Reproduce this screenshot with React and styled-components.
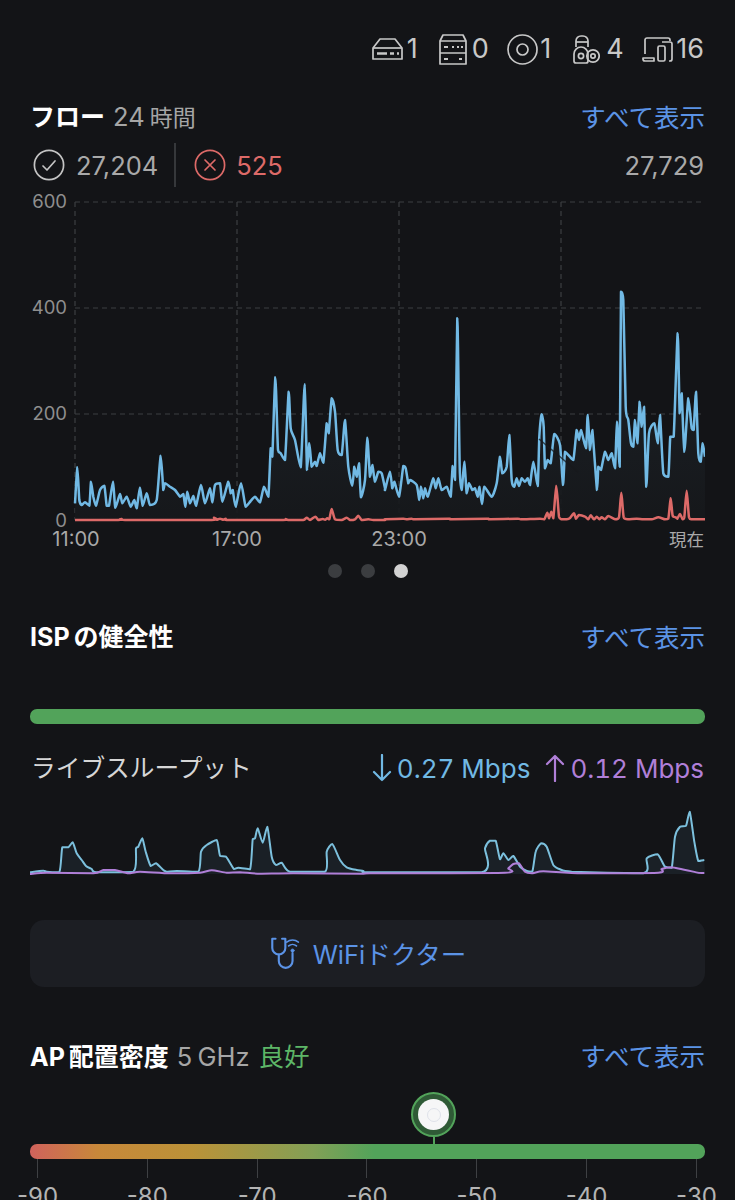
import styled, { createGlobalStyle } from "styled-components";

const GlobalStyle = createGlobalStyle`
   html, body {
      margin: 0;
      height: 1200px;
      overflow: hidden;
      background-color: #131417;
   }
   body {
      font-family: Inter, "Noto Sans CJK JP", sans-serif;
   }
`

const Page = styled.div`
   box-sizing: border-box;
   width: 735px;
   height: 1200px;
   overflow: hidden;
   padding: 34px 30px 0;
   background-color: #131417;
   color: #c6c6c6;
`

const StatusBar = styled.div`
   display: flex;
   justify-content: flex-end;
   align-items: center;
   height: 30px;
   padding-right: 1px;
`

const Stat = styled.div`
   display: flex;
   align-items: center;
   gap: ${(p) => p.$gap}px;
   margin-left: ${(p) => p.$left}px;
   font-size: 27px;
   line-height: 30px;
   color: #c8c8c8;
`

const Head = styled.div`
   box-sizing: border-box;
   display: flex;
   justify-content: space-between;
   align-items: center;
   height: 36px;
   padding-bottom: 4px;
   margin-top: ${(p) => p.$top}px;
`

const TitleGroup = styled.div`
   display: flex;
   align-items: baseline;
   gap: 8px;
   font-size: 25.5px;
   word-spacing: -2px;
   color: #a6a6a6;
`

const Title = styled.span`
   font-size: 25px;
   font-weight: 700;
   color: #fff;
`

const Kanji = styled.span`
   font-size: 23px;
`

const Good = styled.span`
   margin-left: 1px;
   color: #5db667;
`

const More = styled.a`
   font-size: 25.5px;
   color: #5b93e6;
`

const Counts = styled.div`
   display: flex;
   align-items: center;
   height: 44px;
   margin-top: 8px;
   font-size: 25.5px;
   color: #a9a9a9;
`

const Count = styled.span`
   display: flex;
   margin-left: ${(p) => p.$left}px;
   color: ${(p) => p.$color || "inherit"};
`

const Total = styled.span`
   margin-left: auto;
   padding-right: 1px;
`

const Divider = styled.div`
   width: 2px;
   height: 44px;
   margin: 0 18px 0 16px;
   background-color: #36383b;
`

const ChartSvg = styled.svg`
   display: block;
   width: 675px;
   height: ${(p) => p.$height}px;
   margin-top: ${(p) => p.$top}px;
`

const AxisText = styled.text`
   font-family: Inter, "Noto Sans CJK JP", sans-serif;
   font-size: ${(p) => p.$size}px;
   fill: ${(p) => p.$color};
`

const Dots = styled.div`
   display: flex;
   justify-content: center;
   gap: 19px;
   margin-top: 9px;
`

const Dot = styled.div`
   width: 14px;
   height: 14px;
   border-radius: 50%;
   background-color: ${(p) => (p.$active ? "#d2d2d2" : "#3b3d40")};
`

const HealthBar = styled.div`
   height: 15px;
   margin-top: 54px;
   border-radius: 7px;
   background-color: #52a35a;
`

const Throughput = styled.div`
   display: flex;
   align-items: center;
   justify-content: space-between;
   height: 36px;
   margin-top: 26px;
`

const ThroughputLabel = styled.span`
   padding: 0 0 4px 1px;
   font-size: 24.7px;
   color: #d6d6d6;
`

const Rates = styled.div`
   display: flex;
   align-items: center;
   padding-right: 1px;
   font-size: 26px;
   font-variant-numeric: tabular-nums;
`

const Rate = styled.span`
   display: flex;
   align-items: center;
   gap: 5px;
   margin-left: ${(p) => p.$left}px;
   color: ${(p) => p.$color};
`

const DoctorButton = styled.div`
   box-sizing: border-box;
   display: flex;
   justify-content: center;
   align-items: center;
   gap: 10px;
   height: 67px;
   padding-bottom: 3px;
   margin-top: 40px;
   border-radius: 14px;
   background-color: #1c1e23;
   color: #5b93e6;
   font-size: 25.5px;
`

const PinArea = styled.div`
   position: relative;
   height: 52px;
   margin-top: 18px;
`

const Pin = styled.div`
   position: absolute;
   top: 0;
   left: 381px;
   box-sizing: border-box;
   width: 45px;
   height: 45px;
   padding: 5px;
   border: 2px solid #52a35a;
   border-radius: 50%;
   background-color: #2f5a36;
   &::after {
      content: "";
      position: absolute;
      top: 43px;
      left: 19.5px;
      width: 2px;
      height: 9px;
      background-color: #52a35a;
   }
`

const PinFace = styled.div`
   display: flex;
   justify-content: center;
   align-items: center;
   height: 100%;
   border-radius: 50%;
   background-color: #f6f6f7;
`

const PinRing = styled.div`
   width: 12px;
   height: 12px;
   border: 1px solid #dfe2ea;
   border-radius: 50%;
`

const Gradient = styled.div`
   height: 15px;
   border-radius: 7px;
   background: linear-gradient(90deg, #d0625c 0%, #c8883a 10%, #bb9238 24%, #82a056 42%, #52a35a 51%, #52a35a 100%);
`

const Scale = styled.div`
   display: flex;
   justify-content: space-between;
   padding: 0 8px 0 7px;
`

const Tick = styled.div`
   display: flex;
   flex-direction: column;
   align-items: center;
   width: 1px;
   white-space: nowrap;
   font-size: 24px;
   color: #b4b4b4;
   &::before {
      content: "";
      flex: none;
      width: 1px;
      height: 19px;
      margin-bottom: 4px;
      background-color: #3e4043;
   }
`

const flowPoints = [
   // left half, read off at 3x
   105,490, 112,382, 118,480, 125,495, 135,487, 148,497, 153,425, 160,470, 168,497, 180,450, 193,437, 200,497, 207,497, 219,425,
   226,503, 240,462, 247,490, 260,470, 272,500, 283,480, 290,505, 300,443, 308,497, 320,460, 330,495, 350,480, 362,347, 370,450,
   375,430, 390,440, 405,450, 420,470, 430,462, 436,500, 442,455, 450,490, 460,468, 468,497, 483,435, 495,490, 510,445, 517,487,
   525,435, 540,430, 547,485, 565,425, 572,460, 578,450, 587,500, 603,430, 617,500, 632,483, 645,470, 660,487, 672,440, 685,470,
   692,325, 697,350, 706,112, 714,330, 722,340, 735,360, 746,155, 752,265, 765,300, 782,382, 794,133, 801,390, 808,310, 815,380,
   825,365, 830,378, 840,340, 850,368, 860,250, 866,280, 875,175, 885,215, 893,330, 905,345, 915,240, 925,380, 937,437, 943,380,
   950,410, 957,370, 963,472, 975,420, 982,293, 990,410, 997,375, 1005,425, 1015,395, 1025,400, 1035,445,
]

const flowPointsRight = [
   0,630, 15,575, 22,625, 28,605, 42,650, 55,558, 62,565, 70,610, 75,600, 95,615, 103,660, 108,620, 115,655, 120,625, 128,650,
   145,595, 152,625, 160,595, 170,630, 185,620, 197,650, 203,558, 210,600, 217,115, 224,560, 230,630, 238,545, 245,640, 252,610,
   262,630, 270,625, 278,650, 283,620, 291,672, 298,620, 320,650, 335,610, 345,530, 352,580, 365,560, 373,465, 380,600, 388,620,
   395,595, 402,618, 410,595, 420,605, 428,595, 435,615, 445,545, 458,618, 463,470, 470,403, 476,440, 480,565, 488,540, 497,550,
   508,462, 525,495, 534,615, 540,515, 550,525, 565,540, 575,450, 582,480, 588,450, 603,505, 608,405, 615,510, 622,450, 636,630,
   640,560, 648,570, 660,515, 670,540, 680,520, 690,565, 696,425, 704,560, 708,35, 715,60, 722,380, 730,420, 738,490, 745,500,
   750,420, 757,490, 764,365, 770,440, 777,380, 784,620, 792,460, 808,430, 818,490, 825,405, 835,580, 850,590, 856,470, 866,470,
   878,160, 884,400, 890,340, 898,515, 910,355, 920,445, 926,450, 933,335, 940,520, 947,545, 953,490, 960,530,
]

const blockedPoints = [
   105,540, 235,540, 245,537, 255,540, 515,540, 522,533, 530,539, 540,536, 550,539, 557,536, 565,540, 730,540, 737,537, 745,540,
   790,540, 800,533, 810,540, 826,530, 835,540, 848,537, 855,539, 862,535, 868,538, 875,507, 885,538, 905,540, 920,533, 930,540,
   945,538, 955,527, 965,540, 985,538, 1000,540, 1035,540,
]

const blockedPointsRight = [
   0,718, 55,716, 65,718, 80,716, 90,718, 190,716, 200,718, 305,716, 315,718, 398,716, 408,718, 465,716, 478,718, 487,698, 492,715,
   499,695, 505,715, 514,618, 522,710, 530,718, 545,718, 555,714, 567,700, 573,716, 582,705, 600,710, 610,718, 617,706, 627,718,
   635,710, 643,718, 650,712, 660,718, 670,708, 690,718, 702,712, 709,638, 716,712, 730,718, 755,716, 775,718, 800,718, 820,712,
   840,718, 850,716, 857,655, 863,708, 872,712, 877,716, 885,702, 893,718, 898,712, 905,632, 912,712, 920,718, 960,718,
]

const downPoints = [
   90,247, 130,242, 140,245, 178,247, 187,172, 205,172, 218,157, 230,190, 245,210, 258,228, 275,237, 288,247, 400,245, 408,175,
   415,170, 427,145, 437,185, 452,228, 468,220, 490,240, 500,245, 530,243, 595,245, 603,185, 620,165, 650,150, 660,197, 678,200,
   702,237, 715,233, 750,238, 758,148, 765,145, 773,115, 788,158, 802,110, 815,200, 828,225, 845,218, 870,245, 975,245, 980,185,
   997,162, 1020,210, 1040,232, 1070,240, 1090,243,
]

const downPointsRight = [
   15,247, 350,247, 360,175, 375,152, 392,152, 405,208, 415,190, 430,210, 445,198, 465,230, 485,243, 502,245, 512,185,
   528,160, 545,170, 565,225, 585,238, 620,245, 835,250, 845,205, 878,193, 900,230, 920,233, 930,140, 945,110, 963,107, 974,65,
   988,155, 1000,213, 1018,210,
]

const upPoints = [
   90,252, 140,248, 280,250, 310,240, 345,240, 385,250, 420,245, 510,250, 600,248, 635,241, 680,248, 720,247, 780,251, 880,250,
   1090,251,
]

const upPointsRight = [
   15,250, 420,248, 430,235, 445,222, 462,220, 480,245, 500,250, 535,244, 650,250, 880,248, 890,237, 920,232, 1000,248, 1018,249,
]

// crops were read at 3x, so turn them back into page pixels
function toPage(points, left, top) {
   const out = []
   for (let i = 0; i < points.length; i += 2) {
      out.push([left + points[i] / 3, top + points[i + 1] / 3])
   }
   return out
}

function clamp(v, a, b) {
   return Math.min(Math.max(v, Math.min(a, b)), Math.max(a, b))
}

// soft catmull-rom so the spikes come out rounded like the app's chart,
// y of the handles is held inside the segment so peaks don't overshoot
function smooth(line) {
   let d = `${line[0][0].toFixed(1)} ${line[0][1].toFixed(1)}`
   for (let i = 0; i < line.length - 1; i++) {
      const a = line[Math.max(i - 1, 0)]
      const b = line[i]
      const c = line[i + 1]
      const e = line[Math.min(i + 2, line.length - 1)]
      const c1x = b[0] + (c[0] - a[0]) / 9
      const c1y = clamp(b[1] + (c[1] - a[1]) / 9, b[1], c[1])
      const c2x = c[0] - (e[0] - b[0]) / 9
      const c2y = clamp(c[1] - (e[1] - b[1]) / 9, b[1], c[1])
      d += ` C${c1x.toFixed(1)} ${c1y.toFixed(1)} ${c2x.toFixed(1)} ${c2y.toFixed(1)} ${c[0].toFixed(1)} ${c[1].toFixed(1)}`
   }
   return d
}

const flowLine = smooth([...toPage(flowPoints, 40, 340), ...toPage(flowPointsRight, 385, 280)])
const blockedLine = smooth([...toPage(blockedPoints, 40, 340), ...toPage(blockedPointsRight, 385, 280)])
const downLine = smooth([...toPage(downPoints, 0, 790), ...toPage(downPointsRight, 365, 790)])
const upLine = smooth([...toPage(upPoints, 0, 790), ...toPage(upPointsRight, 365, 790)])

function GatewayIcon() {
   return (
      <svg width="31" height="22" viewBox="0 0 31 22" fill="none" stroke="#c8c8c8" strokeWidth="1.7" strokeLinejoin="round">
         <path d="M1 10 8 1h15l7 9v11H1z" />
         <path d="M1 10h29" />
         <path d="M5 15.5h10M18 15.5h4M25 15.5h2" strokeWidth="2.4" />
      </svg>
   )
}

function SwitchIcon() {
   return (
      <svg width="28" height="31" viewBox="0 0 28 31" fill="none" stroke="#c8c8c8" strokeWidth="1.7" strokeLinejoin="round">
         <path d="M1 7 4 1h20l3 6v23H1z" />
         <path d="M1 7h26M1 19h26" />
         <path d="M5 13h4M13 13h2M18 13h2M22 13h2M5 25h4M20 25h3" strokeWidth="1.8" />
      </svg>
   )
}

function AccessPointIcon() {
   return (
      <svg width="31" height="31" viewBox="0 0 31 31" fill="none" stroke="#c8c8c8" strokeWidth="1.7">
         <circle cx="15.5" cy="15.5" r="14.5" />
         <circle cx="15.5" cy="15.5" r="5.5" />
      </svg>
   )
}

function CameraIcon() {
   return (
      <svg width="27" height="29" viewBox="0 0 27 29" fill="none" stroke="#c8c8c8" strokeWidth="1.7" strokeLinejoin="round">
         <path d="M3 12V6a5 5 0 0 1 5-5h2a5 5 0 0 1 5 5v6" />
         <path d="M3 7h12" />
         <path d="M1 19a7 7 0 0 1 14 0v7a2 2 0 0 1-2 2H3a2 2 0 0 1-2-2z" />
         <circle cx="8" cy="21" r="2.6" />
         <circle cx="20" cy="21" r="6.2" />
         <circle cx="20" cy="21" r="2.2" />
      </svg>
   )
}

function ClientIcon() {
   return (
      <svg width="31" height="25" viewBox="0 0 31 25" fill="none" stroke="#c8c8c8" strokeWidth="1.7" strokeLinejoin="round">
         <path d="M3 17V3a2 2 0 0 1 2-2h21a2 2 0 0 1 2 2v1" />
         <path d="M1 21h11v3H3a2 2 0 0 1-2-2z" />
         <rect x="16" y="9" width="7" height="15" rx="1.5" />
         <path d="M20 5h8a2 2 0 0 1 2 2v15a2 2 0 0 1-2 2h-1" />
      </svg>
   )
}

function CheckCircle() {
   return (
      <svg width="32" height="32" viewBox="0 0 32 32" fill="none" stroke="#c4c4c4" strokeWidth="1.7" strokeLinecap="round" strokeLinejoin="round">
         <circle cx="16" cy="16" r="14.6" />
         <path d="m10 17 4 4 8-9" />
      </svg>
   )
}

function CrossCircle() {
   return (
      <svg width="32" height="32" viewBox="0 0 32 32" fill="none" stroke="#dd6a68" strokeWidth="1.7" strokeLinecap="round">
         <circle cx="16" cy="16" r="14.6" />
         <path d="m11 11 10 10M21 11 11 21" />
      </svg>
   )
}

function Arrow({ up, color }) {
   return (
      <svg width="20" height="28" viewBox="0 0 20 28" fill="none" stroke={color} strokeWidth="2.2" strokeLinecap="round" strokeLinejoin="round">
         {up ? <path d="M10 27V2M2 10l8-8 8 8" /> : <path d="M10 1v25M2 18l8 8 8-8" />}
      </svg>
   )
}

function Stethoscope() {
   return (
      <svg width="34" height="33" viewBox="58 36 104 100" fill="none" stroke="#5b93e6" strokeWidth="6.5" strokeLinecap="round" strokeLinejoin="round">
         <path d="M78 44H68v28a20 20 0 0 0 40 0V44H98" />
         <path d="M88 92v20a21 21 0 0 0 42 0V88" />
         <circle cx="130" cy="80" r="5" fill="#5b93e6" strokeWidth="2" />
         <path d="M118 66a18 18 0 0 1 24 0M112 54a30 30 0 0 1 36 0" strokeWidth="5" />
      </svg>
   )
}

function FlowChart() {
   const grid = "#3d3f42"
   return (
      <ChartSvg $top={3} $height={365} viewBox="30 190 675 365">
         <defs>
            <linearGradient id="flowFill" x1="0" y1="0" x2="0" y2="1">
               <stop offset="0" stopColor="#1f262d" />
               <stop offset="1" stopColor="#16181b" />
            </linearGradient>
         </defs>
         {[202, 308, 414].map((y) => (
            <line key={y} x1="75" x2="705" y1={y} y2={y} stroke={grid} strokeWidth="1.2" strokeDasharray="5 4" />
         ))}
         {[75, 237, 399, 561].map((x) => (
            <line key={x} x1={x} x2={x} y1="202" y2="520" stroke={grid} strokeWidth="1.2" strokeDasharray="5 4" />
         ))}
         <path d={`M75 520 L${flowLine} L705 520Z`} fill="url(#flowFill)" opacity="0.9" />
         <path d={`M${flowLine}`} fill="none" stroke="#71b9e4" strokeWidth="2.5" strokeLinejoin="round" />
         <line x1="539" y1="439" x2="578" y2="472" stroke="#17191c" strokeWidth="1.6" opacity="0.75" />
         <path d={`M${blockedLine}`} fill="none" stroke="#dd6a68" strokeWidth="2.5" strokeLinejoin="round" />
         {[["600", 208], ["400", 314], ["200", 420], ["0", 527]].map(([label, y]) => (
            <AxisText key={label} x="67" y={y} textAnchor="end" $size={18.5} $color="#8e8e8e">{label}</AxisText>
         ))}
         {[["11:00", 76], ["17:00", 237], ["23:00", 399]].map(([label, x]) => (
            <AxisText key={label} x={x} y="546" textAnchor="middle" $size={20} $color="#a9a9a9">{label}</AxisText>
         ))}
         <AxisText x="704" y="546" textAnchor="end" $size={17.5} $color="#a9a9a9">現在</AxisText>
      </ChartSvg>
   )
}

function ThroughputChart() {
   return (
      <ChartSvg $top={19} $height={75} viewBox="30 805 675 75">
         <path d={`M30 874 L${downLine} L705 874Z`} fill="#1a2026" />
         <path d={`M${downLine}`} fill="none" stroke="#7cc0dd" strokeWidth="2" strokeLinejoin="round" />
         <path d={`M${upLine}`} fill="none" stroke="#b07fd8" strokeWidth="2" strokeLinejoin="round" />
      </ChartSvg>
   )
}

export default function App() {
   return (
      <Page>
         <GlobalStyle />
         <StatusBar>
            <Stat $gap={4} $left={0}><GatewayIcon />1</Stat>
            <Stat $gap={5} $left={21}><SwitchIcon />0</Stat>
            <Stat $gap={2} $left={18.5}><AccessPointIcon />1</Stat>
            <Stat $gap={6} $left={22}><CameraIcon />4</Stat>
            <Stat $gap={3} $left={18.5}><ClientIcon />16</Stat>
         </StatusBar>

         <Head $top={35}>
            <TitleGroup><Title>フロー</Title><span>24 <Kanji>時間</Kanji></span></TitleGroup>
            <More>すべて表示</More>
         </Head>
         <Counts>
            <Count $left={3}><CheckCircle /></Count>
            <Count $left={11}>27,204</Count>
            <Divider />
            <CrossCircle />
            <Count $left={10} $color="#dd6a68">525</Count>
            <Total>27,729</Total>
         </Counts>
         <FlowChart />
         <Dots>
            <Dot />
            <Dot />
            <Dot $active />
         </Dots>

         <Head $top={41}>
            <TitleGroup><Title>ISP の健全性</Title></TitleGroup>
            <More>すべて表示</More>
         </Head>
         <HealthBar />

         <Throughput>
            <ThroughputLabel>ライブスループット</ThroughputLabel>
            <Rates>
               <Rate $left={0} $color="#71b9e4"><Arrow color="#71b9e4" />0.27 Mbps</Rate>
               <Rate $left={15} $color="#b07fd8"><Arrow up color="#b07fd8" />0.12 Mbps</Rate>
            </Rates>
         </Throughput>
         <ThroughputChart />

         <DoctorButton><Stethoscope />WiFiドクター</DoctorButton>

         <Head $top={51}>
            <TitleGroup><Title>AP 配置密度</Title>5 GHz<Good>良好</Good></TitleGroup>
            <More>すべて表示</More>
         </Head>
         <PinArea>
            <Pin><PinFace><PinRing /></PinFace></Pin>
         </PinArea>
         <Gradient />
         <Scale>
            {[-90, -80, -70, -60, -50, -40, -30].map((n) => (
               <Tick key={n}>{n}</Tick>
            ))}
         </Scale>
      </Page>
   );
}
